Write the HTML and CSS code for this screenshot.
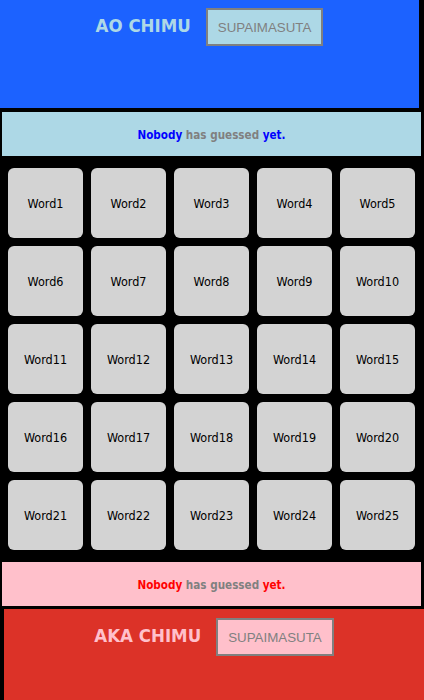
FILE: index.html
```html
<!DOCTYPE html>
<html>
<head>
<meta charset="utf-8">
<link rel="stylesheet" href="styles.css">
</head>
<body>
<div class="page">
  <header class="team team-blue">
    <h1 class="team-name">AO CHIMU</h1>
    <button class="spy-btn">SUPAIMASUTA</button>
  </header>
  <div class="status status-blue">
    <p class="status-text"><span class="hl">Nobody</span> has guessed <span class="hl">yet.</span></p>
  </div>
  <div class="board">
    <div class="card">Word1</div>
    <div class="card">Word2</div>
    <div class="card">Word3</div>
    <div class="card">Word4</div>
    <div class="card">Word5</div>
    <div class="card">Word6</div>
    <div class="card">Word7</div>
    <div class="card">Word8</div>
    <div class="card">Word9</div>
    <div class="card">Word10</div>
    <div class="card">Word11</div>
    <div class="card">Word12</div>
    <div class="card">Word13</div>
    <div class="card">Word14</div>
    <div class="card">Word15</div>
    <div class="card">Word16</div>
    <div class="card">Word17</div>
    <div class="card">Word18</div>
    <div class="card">Word19</div>
    <div class="card">Word20</div>
    <div class="card">Word21</div>
    <div class="card">Word22</div>
    <div class="card">Word23</div>
    <div class="card">Word24</div>
    <div class="card">Word25</div>
  </div>
  <div class="status status-red">
    <p class="status-text"><span class="hl">Nobody</span> has guessed <span class="hl">yet.</span></p>
  </div>
  <footer class="team team-red">
    <h1 class="team-name">AKA CHIMU</h1>
    <button class="spy-btn">SUPAIMASUTA</button>
  </footer>
</div>
</body>
</html>
```
FILE: styles.css
```css
html, body {
  margin: 0;
  padding: 0;
  background: #000;
  height: 100%;
  overflow: hidden;
}
.page {
  display: flex;
  flex-direction: column;
  font-family: "DejaVu Sans Condensed", "DejaVu Sans", Verdana, sans-serif;
}
.team {
  display: flex;
  justify-content: center;
  align-items: flex-start;
  gap: 15px;
  box-sizing: border-box;
}
.team-blue {
  background: #1c62ff;
  width: 419px;
  height: 108px;
  padding-top: 8px;
}
.team-red {
  background: #dc3228;
  margin-left: 4px;
  height: 120px;
  padding-top: 9px;
  margin-top: 3px;
}
.team-name {
  margin: 0;
  font-size: 18.5px;
  font-weight: bold;
  line-height: 36px;
}
.team-blue .team-name { color: #add8e6; }
.team-red .team-name { color: #ffc0cb; }
.spy-btn {
  height: 38px;
  padding: 0 10px;
  border: 2px solid #808080;
  font-family: "Liberation Sans", Arial, sans-serif;
  font-size: 13.333px;
  color: #808080;
}
.team-blue .spy-btn { background: #add8e6; }
.team-red .spy-btn { background: #ffc0cb; }
.status {
  margin-left: 2px;
  width: 419px;
  height: 44px;
  display: flex;
  align-items: center;
  justify-content: center;
  color: #808080;
  padding-top: 1px;
  box-sizing: border-box;
}
.status-text {
  margin: 0;
  font-size: 11.6px;
  font-weight: bold;
}
.status-blue { background: #add8e6; margin-top: 4px; }
.status-blue .hl { color: #0000ff; }
.status-red { background: #ffc0cb; margin-top: 12px; }
.status-red .hl { color: #ff0000; }
.board {
  display: grid;
  grid-template-columns: repeat(5, 75px);
  grid-auto-rows: 70px;
  gap: 8px;
  margin: 12px 0 0 8px;
}
.card {
  background: #d3d3d3;
  border-radius: 6px;
  display: flex;
  align-items: center;
  justify-content: center;
  font-size: 12.5px;
  color: #000;
  padding-top: 1px;
  box-sizing: border-box;
}
```
